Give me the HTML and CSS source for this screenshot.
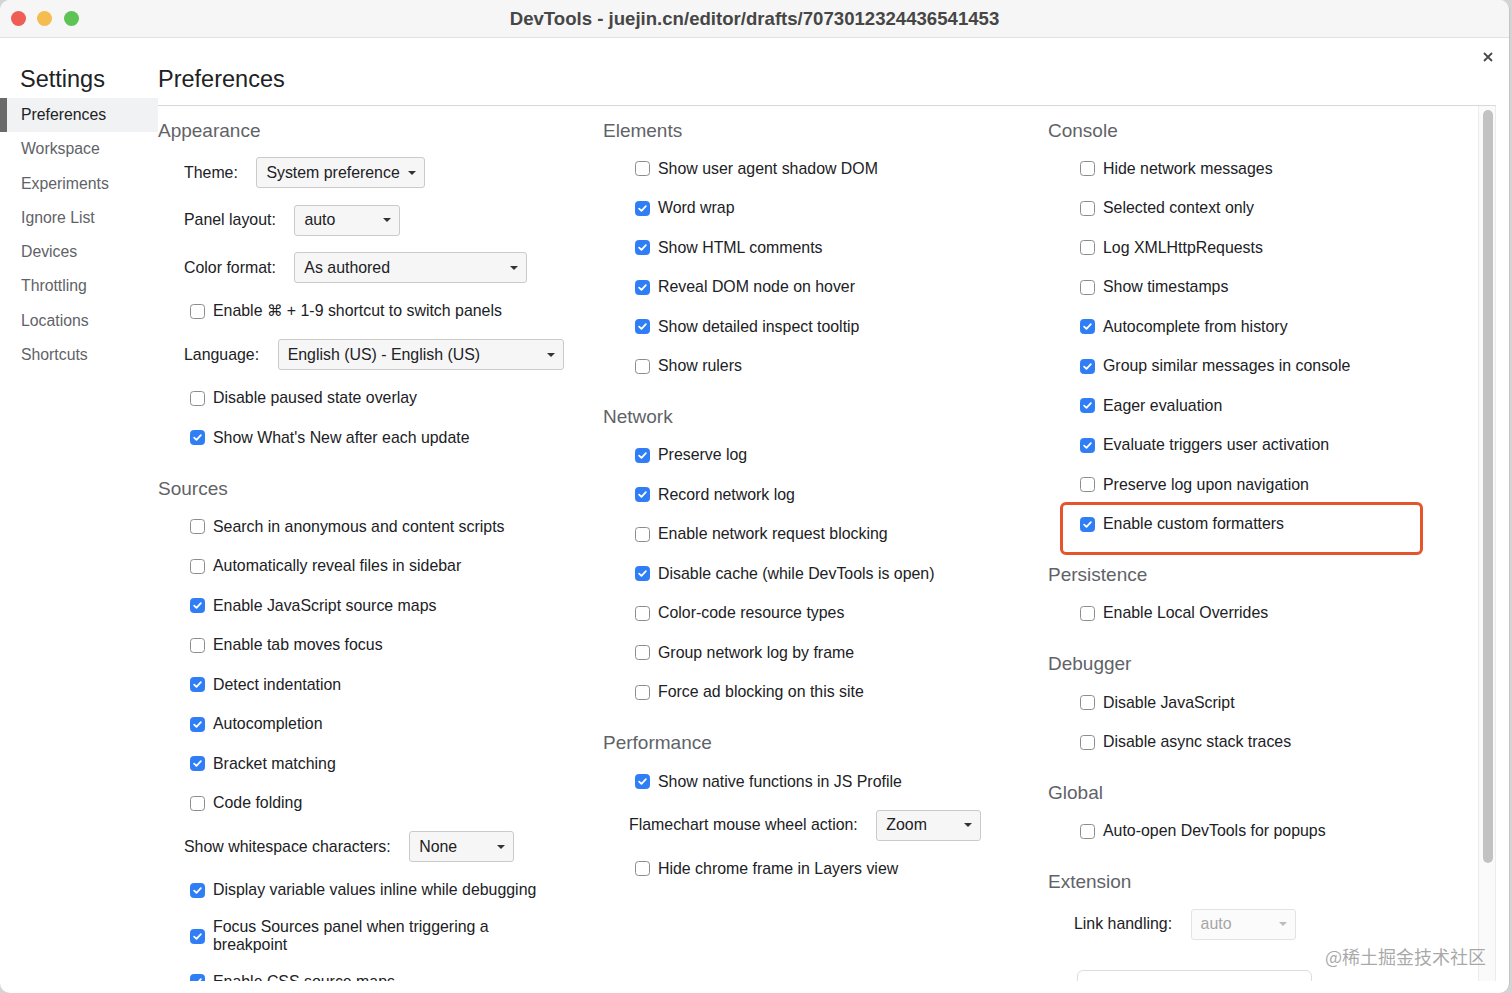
FILE: index.html
```html
<!DOCTYPE html>
<html lang="en">
<head>
<meta charset="utf-8">
<title>DevTools Settings</title>
<link rel="stylesheet" href="styles.css">
</head>
<body>
<div class="window">
  <div class="titlebar">
    <div class="lights">
      <span class="light red"></span>
      <span class="light yellow"></span>
      <span class="light green"></span>
    </div>
    <div class="title">DevTools - juejin.cn/editor/drafts/7073012324436541453</div>
    <div></div>
  </div>

  <div class="settings">
    <nav class="sidebar">
      <h1 class="sidebar-title">Settings</h1>
      <ul class="nav">
        <li class="nav-item active">Preferences</li>
        <li class="nav-item">Workspace</li>
        <li class="nav-item">Experiments</li>
        <li class="nav-item">Ignore List</li>
        <li class="nav-item">Devices</li>
        <li class="nav-item">Throttling</li>
        <li class="nav-item">Locations</li>
        <li class="nav-item">Shortcuts</li>
      </ul>
    </nav>

    <main class="main">
      <header class="main-header"><h2 class="main-title">Preferences</h2></header>
      <div class="body">
        <div class="columns">
          <!-- Column 1 -->
          <div class="col">
            <section class="section">
              <h3 class="section-title">Appearance</h3>
              <div class="srow"><span class="slabel">Theme:</span><div class="select w-theme"><span>System preference</span><svg class="arrow" viewBox="0 0 8 4"><polygon points="0,0 8,0 4,4"/></svg></div></div>
              <div class="srow"><span class="slabel">Panel layout:</span><div class="select w-panel"><span>auto</span><svg class="arrow" viewBox="0 0 8 4"><polygon points="0,0 8,0 4,4"/></svg></div></div>
              <div class="srow"><span class="slabel">Color format:</span><div class="select w-color"><span>As authored</span><svg class="arrow" viewBox="0 0 8 4"><polygon points="0,0 8,0 4,4"/></svg></div></div>
              <div class="row"><span class="cb"></span><span class="label">Enable <span class="cmd">⌘</span> + 1-9 shortcut to switch panels</span></div>
              <div class="srow"><span class="slabel">Language:</span><div class="select w-lang"><span>English (US) - English (US)</span><svg class="arrow" viewBox="0 0 8 4"><polygon points="0,0 8,0 4,4"/></svg></div></div>
              <div class="row"><span class="cb"></span><span class="label">Disable paused state overlay</span></div>
              <div class="row"><span class="cb on"><svg viewBox="0 0 15 15"><path d="M3.6 7.7 L6.3 10.3 L11.4 4.7"/></svg></span><span class="label">Show What's New after each update</span></div>
            </section>
            <section class="section">
              <h3 class="section-title">Sources</h3>
              <div class="row"><span class="cb"></span><span class="label">Search in anonymous and content scripts</span></div>
              <div class="row"><span class="cb"></span><span class="label">Automatically reveal files in sidebar</span></div>
              <div class="row"><span class="cb on"><svg viewBox="0 0 15 15"><path d="M3.6 7.7 L6.3 10.3 L11.4 4.7"/></svg></span><span class="label">Enable JavaScript source maps</span></div>
              <div class="row"><span class="cb"></span><span class="label">Enable tab moves focus</span></div>
              <div class="row"><span class="cb on"><svg viewBox="0 0 15 15"><path d="M3.6 7.7 L6.3 10.3 L11.4 4.7"/></svg></span><span class="label">Detect indentation</span></div>
              <div class="row"><span class="cb on"><svg viewBox="0 0 15 15"><path d="M3.6 7.7 L6.3 10.3 L11.4 4.7"/></svg></span><span class="label">Autocompletion</span></div>
              <div class="row"><span class="cb on"><svg viewBox="0 0 15 15"><path d="M3.6 7.7 L6.3 10.3 L11.4 4.7"/></svg></span><span class="label">Bracket matching</span></div>
              <div class="row"><span class="cb"></span><span class="label">Code folding</span></div>
              <div class="srow"><span class="slabel">Show whitespace characters:</span><div class="select w-small"><span>None</span><svg class="arrow" viewBox="0 0 8 4"><polygon points="0,0 8,0 4,4"/></svg></div></div>
              <div class="row"><span class="cb on"><svg viewBox="0 0 15 15"><path d="M3.6 7.7 L6.3 10.3 L11.4 4.7"/></svg></span><span class="label">Display variable values inline while debugging</span></div>
              <div class="row"><span class="cb on"><svg viewBox="0 0 15 15"><path d="M3.6 7.7 L6.3 10.3 L11.4 4.7"/></svg></span><span class="label">Focus Sources panel when triggering a breakpoint</span></div>
              <div class="row"><span class="cb on"><svg viewBox="0 0 15 15"><path d="M3.6 7.7 L6.3 10.3 L11.4 4.7"/></svg></span><span class="label">Enable CSS source maps</span></div>
            </section>
          </div>

          <!-- Column 2 -->
          <div class="col">
            <section class="section">
              <h3 class="section-title">Elements</h3>
              <div class="row"><span class="cb"></span><span class="label">Show user agent shadow DOM</span></div>
              <div class="row"><span class="cb on"><svg viewBox="0 0 15 15"><path d="M3.6 7.7 L6.3 10.3 L11.4 4.7"/></svg></span><span class="label">Word wrap</span></div>
              <div class="row"><span class="cb on"><svg viewBox="0 0 15 15"><path d="M3.6 7.7 L6.3 10.3 L11.4 4.7"/></svg></span><span class="label">Show HTML comments</span></div>
              <div class="row"><span class="cb on"><svg viewBox="0 0 15 15"><path d="M3.6 7.7 L6.3 10.3 L11.4 4.7"/></svg></span><span class="label">Reveal DOM node on hover</span></div>
              <div class="row"><span class="cb on"><svg viewBox="0 0 15 15"><path d="M3.6 7.7 L6.3 10.3 L11.4 4.7"/></svg></span><span class="label">Show detailed inspect tooltip</span></div>
              <div class="row"><span class="cb"></span><span class="label">Show rulers</span></div>
            </section>
            <section class="section">
              <h3 class="section-title">Network</h3>
              <div class="row"><span class="cb on"><svg viewBox="0 0 15 15"><path d="M3.6 7.7 L6.3 10.3 L11.4 4.7"/></svg></span><span class="label">Preserve log</span></div>
              <div class="row"><span class="cb on"><svg viewBox="0 0 15 15"><path d="M3.6 7.7 L6.3 10.3 L11.4 4.7"/></svg></span><span class="label">Record network log</span></div>
              <div class="row"><span class="cb"></span><span class="label">Enable network request blocking</span></div>
              <div class="row"><span class="cb on"><svg viewBox="0 0 15 15"><path d="M3.6 7.7 L6.3 10.3 L11.4 4.7"/></svg></span><span class="label">Disable cache (while DevTools is open)</span></div>
              <div class="row"><span class="cb"></span><span class="label">Color-code resource types</span></div>
              <div class="row"><span class="cb"></span><span class="label">Group network log by frame</span></div>
              <div class="row"><span class="cb"></span><span class="label">Force ad blocking on this site</span></div>
            </section>
            <section class="section">
              <h3 class="section-title">Performance</h3>
              <div class="row"><span class="cb on"><svg viewBox="0 0 15 15"><path d="M3.6 7.7 L6.3 10.3 L11.4 4.7"/></svg></span><span class="label">Show native functions in JS Profile</span></div>
              <div class="srow"><span class="slabel">Flamechart mouse wheel action:</span><div class="select w-small"><span>Zoom</span><svg class="arrow" viewBox="0 0 8 4"><polygon points="0,0 8,0 4,4"/></svg></div></div>
              <div class="row"><span class="cb"></span><span class="label">Hide chrome frame in Layers view</span></div>
            </section>
          </div>

          <!-- Column 3 -->
          <div class="col">
            <section class="section">
              <h3 class="section-title">Console</h3>
              <div class="row"><span class="cb"></span><span class="label">Hide network messages</span></div>
              <div class="row"><span class="cb"></span><span class="label">Selected context only</span></div>
              <div class="row"><span class="cb"></span><span class="label">Log XMLHttpRequests</span></div>
              <div class="row"><span class="cb"></span><span class="label">Show timestamps</span></div>
              <div class="row"><span class="cb on"><svg viewBox="0 0 15 15"><path d="M3.6 7.7 L6.3 10.3 L11.4 4.7"/></svg></span><span class="label">Autocomplete from history</span></div>
              <div class="row"><span class="cb on"><svg viewBox="0 0 15 15"><path d="M3.6 7.7 L6.3 10.3 L11.4 4.7"/></svg></span><span class="label">Group similar messages in console</span></div>
              <div class="row"><span class="cb on"><svg viewBox="0 0 15 15"><path d="M3.6 7.7 L6.3 10.3 L11.4 4.7"/></svg></span><span class="label">Eager evaluation</span></div>
              <div class="row"><span class="cb on"><svg viewBox="0 0 15 15"><path d="M3.6 7.7 L6.3 10.3 L11.4 4.7"/></svg></span><span class="label">Evaluate triggers user activation</span></div>
              <div class="row"><span class="cb"></span><span class="label">Preserve log upon navigation</span></div>
              <div class="row"><span class="cb on"><svg viewBox="0 0 15 15"><path d="M3.6 7.7 L6.3 10.3 L11.4 4.7"/></svg></span><span class="label">Enable custom formatters</span></div>
            </section>
            <section class="section">
              <h3 class="section-title">Persistence</h3>
              <div class="row"><span class="cb"></span><span class="label">Enable Local Overrides</span></div>
            </section>
            <section class="section">
              <h3 class="section-title">Debugger</h3>
              <div class="row"><span class="cb"></span><span class="label">Disable JavaScript</span></div>
              <div class="row"><span class="cb"></span><span class="label">Disable async stack traces</span></div>
            </section>
            <section class="section">
              <h3 class="section-title">Global</h3>
              <div class="row"><span class="cb"></span><span class="label">Auto-open DevTools for popups</span></div>
            </section>
            <section class="section">
              <h3 class="section-title">Extension</h3>
              <div class="srow"><span class="slabel">Link handling:</span><div class="select w-small disabled"><span>auto</span><svg class="arrow" viewBox="0 0 8 4"><polygon points="0,0 8,0 4,4"/></svg></div></div>
              <div class="ext-box"></div>
            </section>
          </div>
        </div>
        <div class="scrollbar"><div class="thumb"></div></div>
      </div>
    </main>
  </div>

  <button class="close" aria-label="Close"><svg viewBox="0 0 10 10"><path d="M1 1 L9 9 M9 1 L1 9"/></svg></button>
  <div class="highlight"></div>
  <div class="watermark">@稀土掘金技术社区</div>
</div>
</body>
</html>
```

FILE: styles.css
```css
* { box-sizing: border-box; }

html, body {
  margin: 0;
  padding: 0;
  background: #d4d4d4;
}

body {
  font-family: "Liberation Sans", Arial, "Noto Sans CJK SC", sans-serif;
  color: #202124;
  width: 1512px;
  height: 993px;
  overflow: hidden;
}

.window {
  position: relative;
  width: 1510px;
  height: 993px;
  background: #ffffff;
  border-radius: 10px;
  border-right: 1px solid #c4c4c4;
  overflow: hidden;
}

/* Title bar */
.titlebar {
  height: 38px;
  background: #f6f6f6;
  border-bottom: 1px solid #e2e2e2;
  display: grid;
  grid-template-columns: 1fr auto 1fr;
  align-items: center;
}

.lights {
  display: flex;
  gap: 11.5px;
  padding-left: 10.5px;
}

.light {
  width: 15px;
  height: 15px;
  border-radius: 50%;
  display: block;
}
.light.red { background: #ee5e57; }
.light.yellow { background: #f5bd4f; }
.light.green { background: #5dc354; }

.title {
  font-weight: bold;
  font-size: 18.6px;
  color: #464646;
  white-space: nowrap;
  padding-top: 1px;
}

/* Settings layout */
.settings {
  display: flex;
}

.sidebar {
  width: 158px;
  flex: none;
}

.sidebar-title {
  margin: 0;
  padding: 27px 0 0 20px;
  font-size: 23.5px;
  line-height: 28px;
  font-weight: normal;
  color: #202124;
}

.nav {
  list-style: none;
  margin: 5px 0 0;
  padding: 0;
}

.nav-item {
  position: relative;
  height: 34.3px;
  line-height: 34.3px;
  padding-left: 21px;
  font-size: 15.8px;
  color: #5f6368;
}

.nav-item.active {
  background: #f1f2f3;
  color: #202124;
}

.nav-item.active::before {
  content: "";
  position: absolute;
  left: 0;
  top: 0;
  bottom: 0;
  width: 7px;
  background: #6a6a6a;
}

.main {
  flex: 1;
  padding-right: 13px;
}

.main-header {
  padding: 27px 0 12px;
  border-bottom: 1px solid #d8d8d8;
}

.main-title {
  margin: 0;
  font-size: 23.5px;
  line-height: 28px;
  font-weight: normal;
  color: #202124;
}

.body {
  display: flex;
  height: 875px;
  overflow: hidden;
}

.columns {
  flex: 1;
  display: grid;
  grid-template-columns: 445px 445px 1fr;
  align-items: start;
  padding-top: 6.5px;
  overflow: hidden;
}

.section {
  margin-bottom: 13px;
}

.section-title {
  margin: 0;
  height: 36.6px;
  line-height: 36.6px;
  font-size: 19px;
  font-weight: normal;
  color: #5f6368;
}

.row {
  display: flex;
  align-items: center;
  min-height: 39.5px;
  padding: 8px 0 8px 32px;
}

.label {
  font-size: 15.9px;
  line-height: 18px;
  max-width: 335px;
}

.cmd {
  font-family: "DejaVu Sans", sans-serif;
  font-size: 15.5px;
}

.cb {
  flex: none;
  width: 15px;
  height: 15px;
  margin-right: 8px;
  border: 1px solid #8c8c8c;
  border-radius: 3.5px;
  background: #fff;
  display: block;
}

.cb.on {
  background: #2f7ef5;
  border-color: #2f7ef5;
}

.cb svg {
  display: block;
  width: 13px;
  height: 13px;
  fill: none;
  stroke: #fff;
  stroke-width: 2;
  stroke-linecap: round;
  stroke-linejoin: round;
  overflow: visible;
}

.srow {
  display: flex;
  align-items: center;
  height: 47.5px;
  padding-left: 26px;
}

.slabel {
  font-size: 15.9px;
  margin-right: 18.5px;
  white-space: nowrap;
}

.select {
  height: 31px;
  border: 1px solid #cacaca;
  border-radius: 3px;
  background: #f6f6f6;
  display: flex;
  align-items: center;
  justify-content: space-between;
  padding: 0 8px 0 9px;
  font-size: 15.9px;
  color: #202124;
}

.select .arrow {
  width: 8px;
  height: 4px;
  fill: #333;
  flex: none;
}

.select.disabled {
  color: #a6a6a6;
  background: #fbfbfb;
  border-color: #e3e3e3;
}
.select.disabled .arrow { fill: #bcbcbc; }

.w-theme { width: 169px; }
.w-panel { width: 106px; }
.w-color { width: 233px; }
.w-lang { width: 286px; }
.w-small { width: 105px; }

.ext-box {
  margin: 22px 0 0 29px;
  width: 235px;
  height: 40px;
  border: 1px solid #dddddd;
  border-radius: 6px;
}

/* Scrollbar */
.scrollbar {
  width: 18px;
  flex: none;
  border-left: 1px solid #ececec;
  border-right: 1px solid #ececec;
  background: #fafafa;
  padding: 4px 0 0 3.5px;
}

.thumb {
  width: 10px;
  height: 753px;
  background: #c2c2c2;
  border-radius: 5px;
}

/* Overlays */
.close {
  position: absolute;
  left: 1483px;
  top: 52px;
  width: 10px;
  height: 10px;
  padding: 0;
  border: 0;
  background: none;
}

.close svg {
  display: block;
  width: 10px;
  height: 10px;
  stroke: #4a4a4a;
  stroke-width: 1.8;
}

.highlight {
  position: absolute;
  left: 1060px;
  top: 502px;
  width: 363px;
  height: 53px;
  border: 3px solid #e5552b;
  border-radius: 6px;
}

.watermark {
  position: absolute;
  left: 1325px;
  top: 944px;
  font-family: "Noto Sans CJK SC", sans-serif;
  font-size: 18px;
  line-height: 24px;
  color: rgba(140, 140, 140, 0.75);
  white-space: nowrap;
}
```
